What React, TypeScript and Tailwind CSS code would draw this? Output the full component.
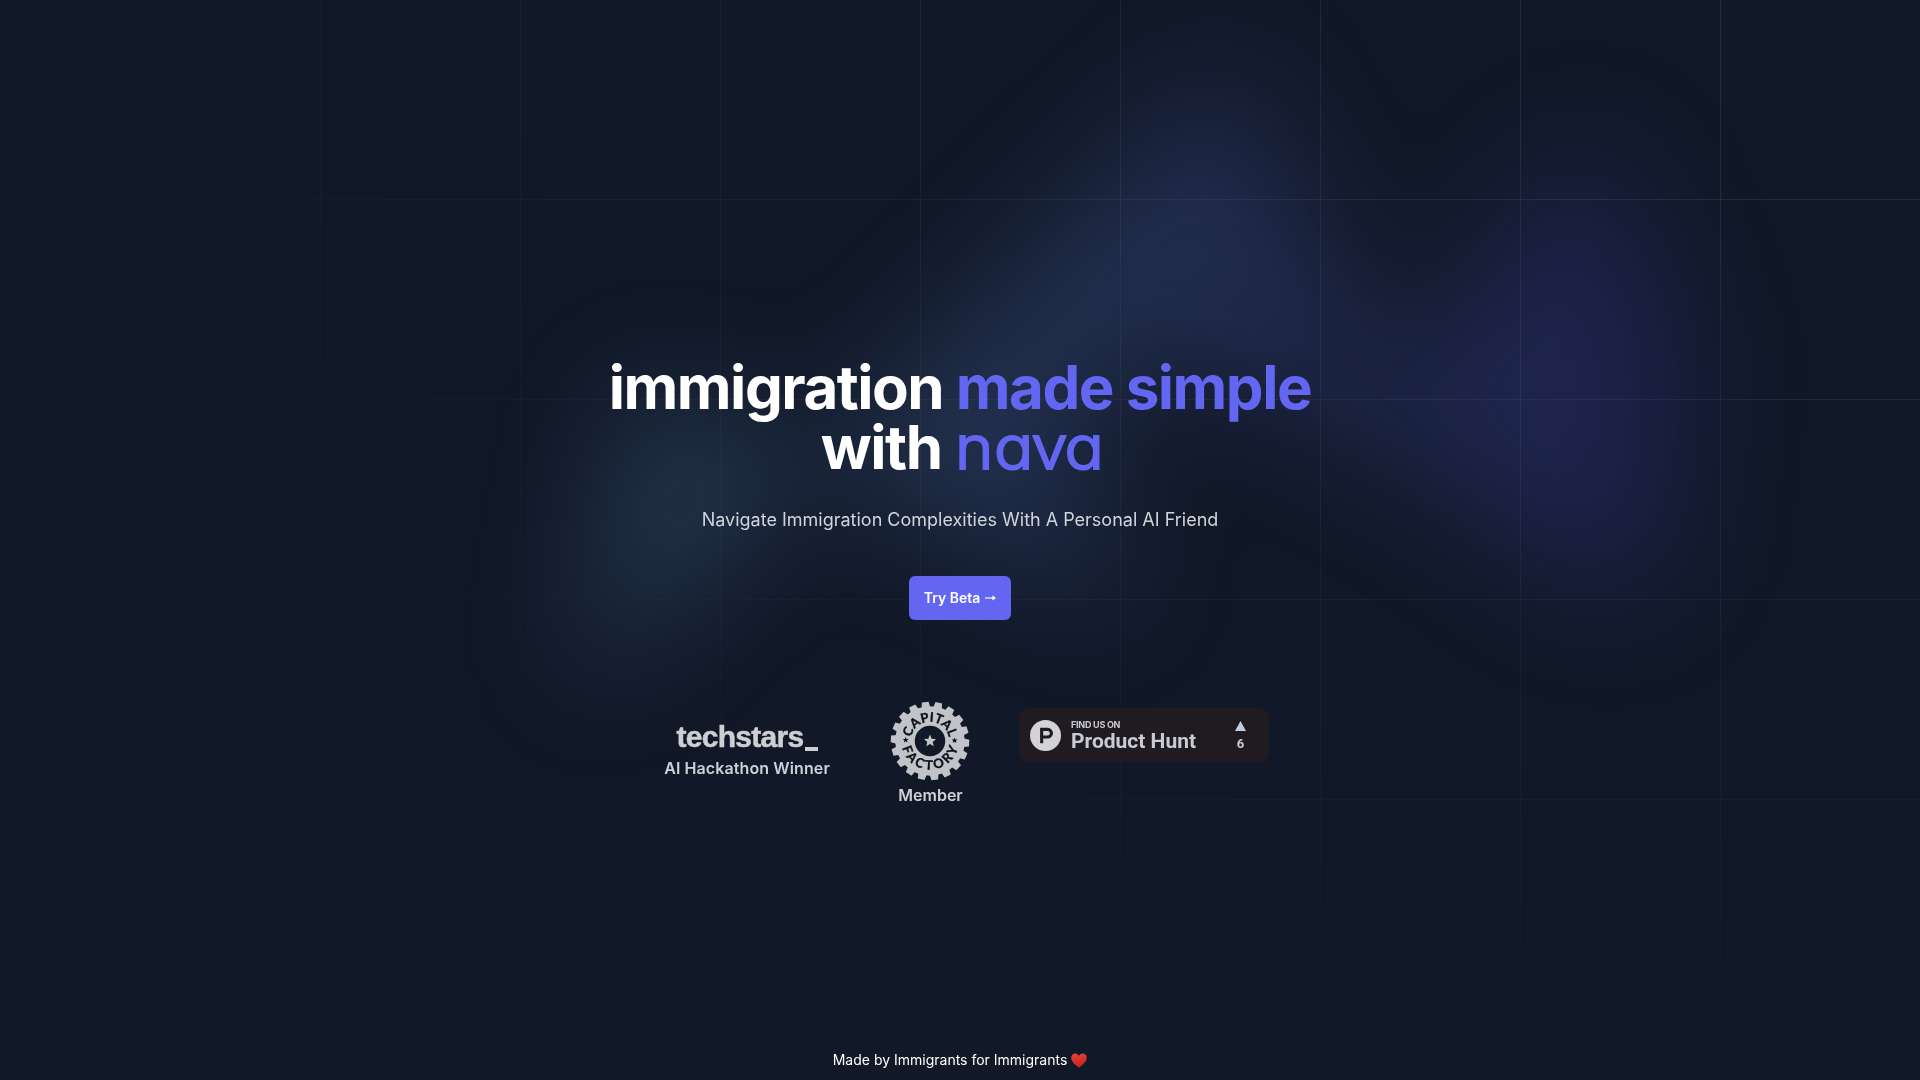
const BLOB =
  'polygon(73.6% 51.7%, 91.7% 11.8%, 100% 46.4%, 97.4% 82.2%, 92.5% 84.9%, 75.7% 64%, 55.3% 47.5%, 46.5% 49.4%, 45% 62.9%, 50.3% 87.2%, 21.3% 64.1%, 0.1% 100%, 5.4% 51.1%, 21.4% 63.9%, 58.9% 0.2%, 73.6% 51.7%)';

function Backdrop() {
  return (
    <div className="absolute inset-0 -z-10 overflow-hidden">
      <svg
        className="absolute inset-0 h-full w-full stroke-white/10 [mask-image:radial-gradient(104%_104%_at_top_right,white,transparent)]"
        aria-hidden="true"
      >
        <defs>
          <pattern id="grid" width="200" height="200" x="120" y="-1" patternUnits="userSpaceOnUse">
            <path d="M.5 200V.5H200" fill="none" />
          </pattern>
        </defs>
        <rect width="100%" height="100%" strokeWidth="0" fill="url(#grid)" />
      </svg>
      <div className="absolute top-[60px] left-[576px] transform-gpu blur-3xl" aria-hidden="true">
        <div
          className="aspect-[1108/632] w-[1108px] bg-linear-to-r/srgb from-[#80caff] to-[#4f46e5] opacity-20"
          style={{ clipPath: BLOB }}
        />
      </div>
    </div>
  );
}

function star(cx: number, cy: number, r: number) {
  return Array.from({ length: 10 }, (_, i) => {
    const radius = i % 2 ? r * 0.45 : r;
    const a = (i * Math.PI) / 5 - Math.PI / 2;
    return `${cx + radius * Math.cos(a)},${cy + radius * Math.sin(a)}`;
  }).join(' ');
}

function CapitalFactoryLogo() {
  return (
    <svg className="h-[80px] w-[80px]" viewBox="-40 -40 80 80" aria-label="Capital Factory">
      <defs>
        <path id="arcTop" d="M-19.3 0A19.3 19.3 0 0 1 19.3 0" />
        <path id="arcBottom" d="M-28.6 0A28.6 28.6 0 0 0 28.6 0" />
      </defs>
      <g fill="#c1c3c8">
        {Array.from({ length: 18 }, (_, i) => (
          <path key={i} d="M-4.4 -33L-3.4 -39.2H3.4L4.4 -33Z" transform={`rotate(${i * 20 - 7})`} />
        ))}
      </g>
      <circle r="25" fill="none" stroke="#c1c3c8" strokeWidth="19.5" />
      <polygon points={star(0, 0, 6.4)} fill="#c1c3c8" />
      <g fill="#0c1018">
        <polygon points={star(-24.3, -1, 3)} />
        <polygon points={star(24.6, -0.5, 3)} />
        <g
          fontFamily="Lato, sans-serif"
          fontWeight="700"
          fontSize="13"
          textAnchor="middle"
          stroke="#0c1018"
          strokeWidth="0.35"
        >
          <text>
            <textPath href="#arcTop" startOffset="50%" textLength="53" lengthAdjust="spacing">CAPITAL</textPath>
          </text>
          <text>
            <textPath href="#arcBottom" startOffset="50%" textLength="76" lengthAdjust="spacing">FACTORY</textPath>
          </text>
        </g>
      </g>
    </svg>
  );
}

function ProductHuntBadge() {
  return (
    <div className="flex h-[54px] w-[250px] items-center rounded-[10px] bg-[#1f1b20] pl-[11px] font-[Roboto,sans-serif] text-[#c9cbd3]">
      <svg className="h-[31px] w-[31px] shrink-0" viewBox="0 0 31 31">
        <circle cx="15.5" cy="15.5" r="15.5" fill="#d3d2d6" />
        <path
          d="M17.6 15.5h-4.4v-4.6h4.4a2.3 2.3 0 0 1 0 4.6M17.6 7.8H10.1v15.4h3.1v-4.6h4.4a5.4 5.4 0 0 0 0-10.8"
          fill="#1f1b20"
          fillRule="evenodd"
        />
      </svg>
      <div className="ml-[10px] flex w-[164px] flex-col pt-[2px]">
        <span className="font-[Inter,sans-serif] text-[9px] leading-[10px] font-bold tracking-[-0.25px]">
          FIND US ON
        </span>
        <span className="text-[21px] leading-[23px] font-bold">Product Hunt</span>
      </div>
      <div className="flex w-[11px] flex-col items-center pt-[1px]">
        <svg className="h-[10px] w-[11px]" viewBox="0 0 11 10">
          <path d="M5.5 0L11 10H0Z" fill="#c3cbdc" />
        </svg>
        <span className="mt-[5px] text-[13px] leading-[15px] font-bold">6</span>
      </div>
    </div>
  );
}

export default function App() {
  return (
    <div className="relative isolate flex h-[1080px] w-[1920px] flex-col items-center overflow-hidden bg-[#111827] font-[Inter,sans-serif]">
      <Backdrop />
      <h1 className="mt-[357px] text-center text-[60px] leading-[60px] font-bold tracking-[-1.5px] text-white">
        immigration <span className="text-[#6366f1]">made simple</span>
        <br />
        with{' '}
        <span className="ml-[1px] inline-block w-[144px] origin-left scale-x-[1.09] text-left font-light tracking-[-1.8px] text-[#6366f1] [-webkit-text-stroke:2px_#6366f1] [font-feature-settings:'cv11'] [stroke-linejoin:round]">
          <span className="tracking-[0.4px]">n</span>ava
        </span>
      </h1>
      <p className="mt-[27px] text-[18px] leading-8 text-[#d1d5db]">
        Navigate Immigration Complexities With A Personal AI Friend
      </p>
      <a className="mt-[40px] flex h-[44px] w-[102px] items-center justify-center gap-[5px] rounded-md bg-[#6366f1] text-[14px] leading-5 font-semibold whitespace-pre text-white">
        Try Beta
        <svg className="h-[6px] w-[11px]" viewBox="0 0 11 6">
          <path d="M0 3H9" stroke="white" strokeWidth="1.2" />
          <path d="M7.4 0.5L11 3L7.4 5.5Z" fill="white" />
        </svg>
      </a>
      <div className="mt-[81px] ml-[13px] flex w-[605px] items-start text-[16px] leading-6 font-semibold text-[#ced1d7]">
        <div className="flex w-[166px] flex-col items-center pt-[20px]">
          <div className="flex h-[35px] items-end pb-[2px] font-['Liberation_Sans',sans-serif] text-[30px] leading-[34px] font-bold tracking-[-0.7px] text-[#cdd0d3] [-webkit-text-stroke:0.5px_#cdd0d3]">
            <span>techstars</span>
            <span className="mb-[3px] ml-[1px] h-[4px] w-[13px] bg-[#cdd0d3]" />
          </div>
          <span className="tracking-[0.1px] whitespace-nowrap">AI Hackathon Winner</span>
        </div>
        <div className="ml-[60px] flex w-[80px] flex-col items-center">
          <CapitalFactoryLogo />
          <span className="mt-[2px] pl-[1px]">Member</span>
        </div>
        <div className="mt-[7px] ml-[49px]">
          <ProductHuntBadge />
        </div>
      </div>
      <footer className="mt-auto flex items-center pb-[10px] text-[14px] leading-5 text-white">
        <span className="whitespace-pre">Made by Immigrants for Immigrants </span>
        <svg className="h-[15px] w-[16px]" viewBox="0 0 16 15">
          <defs>
            <linearGradient id="heart" x1="0" y1="0" x2="0.3" y2="1">
              <stop offset="0" stopColor="#ee4437" />
              <stop offset="1" stopColor="#c3241c" />
            </linearGradient>
          </defs>
          <path
            d="M8 14.8C5 12.6 0.2 9 0.2 4.6C0.2 2 2 0.4 4.2 0.4C6 0.4 7.3 1.5 8 3C8.7 1.5 10 0.4 11.8 0.4C14 0.4 15.8 2 15.8 4.6C15.8 9 11 12.6 8 14.8Z"
            fill="url(#heart)"
          />
        </svg>
      </footer>
    </div>
  );
}
